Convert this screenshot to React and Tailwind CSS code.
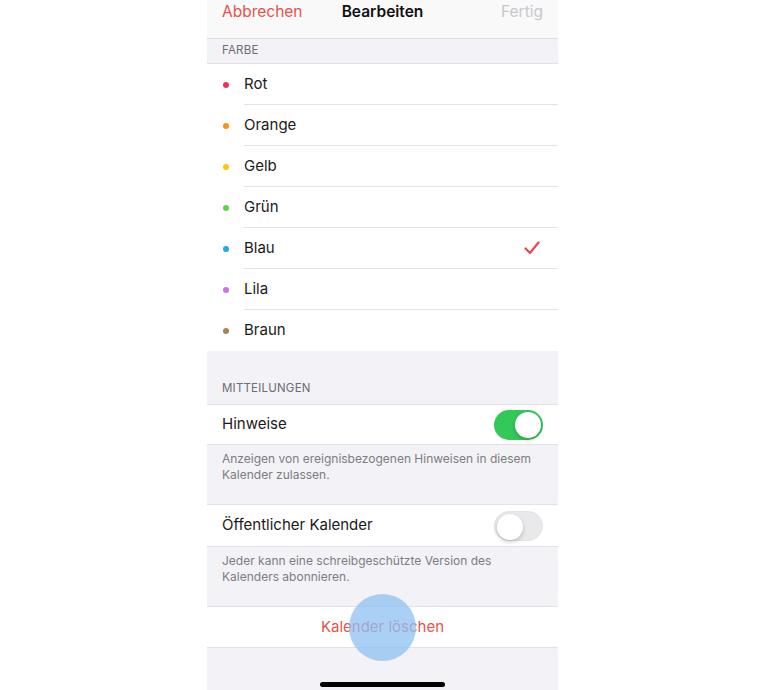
import React from "react";

const colors = [
  { name: "Rot", c: "bg-[#f0305a]" },
  { name: "Orange", c: "bg-[#f7960e]" },
  { name: "Gelb", c: "bg-[#fbc80c]" },
  { name: "Grün", c: "bg-[#5bd548]" },
  { name: "Blau", c: "bg-[#1eaaf0]", checked: true },
  { name: "Lila", c: "bg-[#cc73e1]" },
  { name: "Braun", c: "bg-[#a2845e]" },
];

function Toggle({ on }) {
  return on ? (
    <div className="w-[49px] h-[30px] rounded-full bg-[#34c759] p-[2px] flex justify-end">
      <div className="w-[26px] h-[26px] rounded-full bg-white shadow-[0_2px_4px_rgba(0,0,0,0.2)]" />
    </div>
  ) : (
    <div className="w-[49px] h-[30px] rounded-full bg-[#e9e9ec] p-[2px] flex justify-start border border-[#e3e3e6]">
      <div className="w-[26px] h-[26px] rounded-full bg-white shadow-[0_2px_4px_rgba(0,0,0,0.2)]" />
    </div>
  );
}

export default function App() {
  return (
    <div
      className="w-[764px] h-[690px] bg-white flex justify-center overflow-hidden"
      style={{ fontFamily: "Inter, 'Noto Sans', sans-serif" }}
    >
      <div className="w-[351px] h-[690px] bg-[#f2f2f7] flex flex-col relative ml-[1px]">
        {/* nav */}
        <div className="h-[39px] bg-[#f9f9f9] border-b border-[#dcdce0] flex items-start pt-[2px] px-[15px] justify-between relative">
          <span className="text-[15.5px] text-[#e5534b] leading-[20px]">Abbrechen</span>
          <span className="text-[15.5px] font-semibold text-[#111] leading-[20px] absolute left-1/2 -translate-x-1/2 top-[2px]">
            Bearbeiten
          </span>
          <span className="text-[15.5px] text-[#c7c7cc] leading-[20px]">Fertig</span>
        </div>
        {/* FARBE header */}
        <div className="h-[25px] flex items-center px-[15px] border-b border-[#e2e2e6]">
          <span className="text-[11.5px] text-[#6d6d72] tracking-[0.2px]">FARBE</span>
        </div>
        <div className="bg-white">
          {colors.map((col, i) => (
            <div key={col.name} className="h-[41px] flex items-center">
              <div className="w-[37px] flex justify-center pl-[0px]">
                <div className={`w-[6px] h-[6px] rounded-full ${col.c}`} />
              </div>
              <div
                className={`flex-1 h-full flex items-center pr-[18px] ${
                  i < colors.length - 1 ? "border-b border-[#e3e3e6]" : ""
                }`}
              >
                <span className="flex-1 text-[15px] text-[#1a1a1a]">{col.name}</span>
                {col.checked && (
                  <svg width="16" height="14" viewBox="0 0 16 14">
                    <path
                      d="M1.5 7.5 L6 12 L14.5 1.5"
                      fill="none"
                      stroke="#e5484d"
                      strokeWidth="2.2"
                      strokeLinecap="round"
                      strokeLinejoin="round"
                    />
                  </svg>
                )}
              </div>
            </div>
          ))}
        </div>
        {/* Mitteilungen */}
        <div className="h-[54px] flex items-end pb-[7px] px-[15px] border-b border-[#e2e2e6]">
          <span className="text-[11.5px] text-[#6d6d72] tracking-[0.2px]">MITTEILUNGEN</span>
        </div>
        <div className="bg-white h-[40px] flex items-center justify-between pl-[15px] pr-[15px] border-b border-[#e2e2e6]">
          <span className="text-[15px] text-[#1a1a1a]">Hinweise</span>
          <Toggle on />
        </div>
        <div className="h-[60px] px-[15px] pt-[6px] border-b border-[#e2e2e6]">
          <p className="text-[12px] leading-[16px] text-[#7d7d82]">
            Anzeigen von ereignisbezogenen Hinweisen in diesem Kalender zulassen.
          </p>
        </div>
        <div className="bg-white h-[42px] flex items-center justify-between pl-[15px] pr-[15px] border-b border-[#e2e2e6]">
          <span className="text-[15px] text-[#1a1a1a]">Öffentlicher Kalender</span>
          <Toggle on={false} />
        </div>
        <div className="h-[60px] px-[15px] pt-[6px] border-b border-[#e2e2e6]">
          <p className="text-[12px] leading-[16px] text-[#7d7d82] pr-[50px]">
            Jeder kann eine schreibgeschützte Version des Kalenders abonnieren.
          </p>
        </div>
        <div className="bg-white h-[41px] flex items-center justify-center border-b border-[#e2e2e6]">
          <span className="text-[15px] text-[#e5534b]">Kalender löschen</span>
        </div>
        <div className="flex-1 flex items-end justify-center pb-[3px]">
          <div className="w-[125px] h-[5px] rounded-full bg-black" />
        </div>
        {/* touch indicator */}
        <div className="absolute left-[142px] top-[594px] w-[67px] h-[67px] rounded-full bg-[#8ec0f2]/75" />
      </div>
    </div>
  );
}
